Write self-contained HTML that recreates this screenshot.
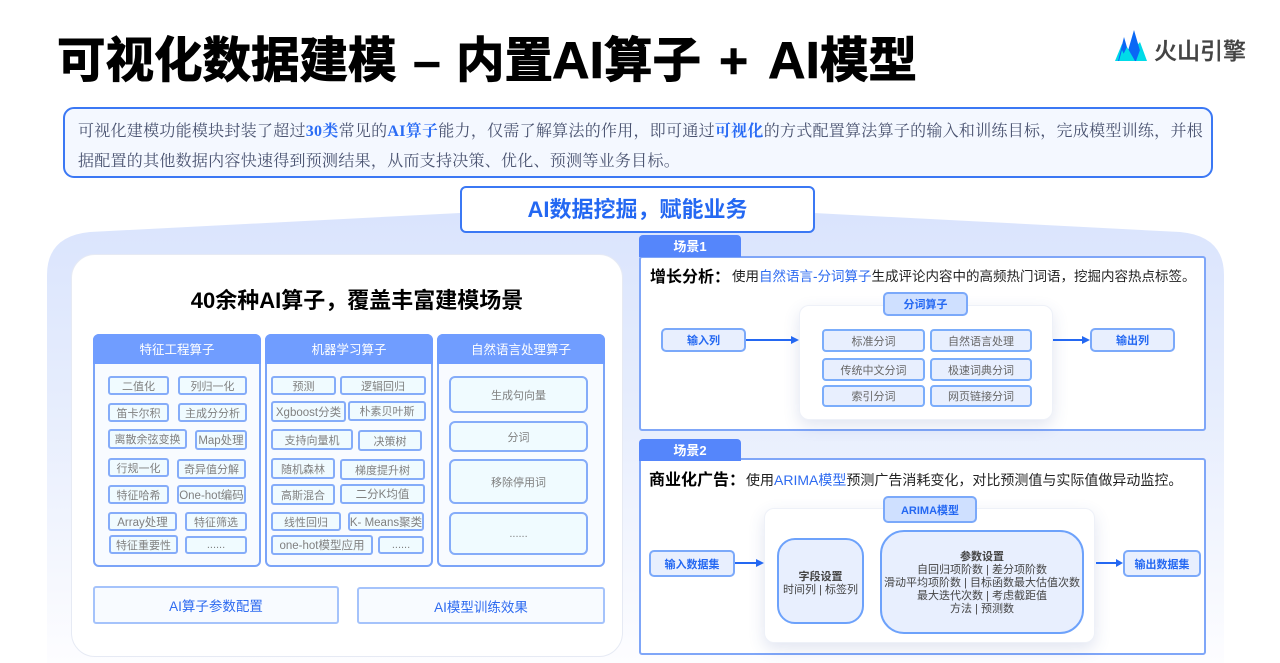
<!DOCTYPE html>
<html lang="zh"><head><meta charset="utf-8"><title>可视化数据建模</title>
<style>
*{box-sizing:border-box;margin:0;padding:0}
html,body{width:1280px;height:663px;overflow:hidden;background:#fff}
body{position:relative;font-family:"Liberation Sans","Noto Sans CJK SC",sans-serif}
.a{position:absolute}
.t{position:absolute;white-space:nowrap}
.title{top:26px;font-size:48.5px;line-height:70px;font-weight:700;color:#000;-webkit-text-stroke:1px #000}
.ai{font-size:52px;-webkit-text-stroke:.6px #000}
.desc{left:63px;top:107px;width:1150px;height:71px;background:#f4f8ff;border:2px solid #3b78f4;border-radius:11px}
.dl{left:78px;font-family:"Liberation Serif","Noto Serif CJK SC",serif;font-size:16px;letter-spacing:.27px;line-height:24px;color:#4a5370}
.dl b{color:#2a6cf5;font-weight:700}
.mid{left:460px;top:186px;width:355px;height:47px;background:#fff;border:2px solid #3b78f4;border-radius:6px;color:#2468f2;font-size:22px;font-weight:700;line-height:43px;text-align:center}
.card{left:71px;top:254px;width:552px;height:403px;background:#fff;border:1px solid #e6eaf4;border-radius:24px}
.col{border:2px solid #7ba4f8;border-radius:6px;background:#f8fbff;top:334px;height:233px}
.hd{position:absolute;left:-2px;right:-2px;top:-2px;height:30px;background:#709dff;border-radius:6px 6px 0 0;color:#fff;font-size:12.5px;line-height:32px;text-align:center}
.c{position:absolute;border:2px solid #85acf9;border-radius:3px;background:#f0fbff;color:#808080;font-size:11px;display:flex;align-items:center;justify-content:center;white-space:nowrap;overflow:hidden}
.n{font-size:11.5px}
.l{border-radius:6px;border-width:2px}
.bt{position:absolute;border:2px solid #a5c3fb;border-radius:3px;background:#f8fbff;color:#2e6bf0;font-size:13.5px;display:flex;align-items:center;justify-content:center}
.box{left:639px;width:567px;background:#fff;border:2px solid #7fa6f8;border-radius:3px}
.tab{left:639px;width:102px;height:22px;background:#5586fb;border-radius:4px 4px 0 0;color:#fff;font-size:13px;font-weight:700;line-height:24px;text-align:center}
.h{font-size:14px;line-height:20px;color:#222}
.h b{font-size:16px;color:#000;font-weight:700}
.h i{font-style:normal;color:#2e6bf0}
.w{background:#fff;border:1px solid #eef1f8;border-radius:10px;box-shadow:0 6px 16px rgba(70,95,170,.16)}
.io{position:absolute;background:#e8effe;border:2px solid #7ba9fa;border-radius:5px;color:#2468f2;font-size:11px;font-weight:700;display:flex;align-items:center;justify-content:center;white-space:nowrap}
.tag{position:absolute;background:#cfe0ff;border:2px solid #7ba9fa;border-radius:5px;color:#2468f2;font-size:11px;font-weight:700;display:flex;align-items:center;justify-content:center}
.s{position:absolute;background:#e8effe;border:2px solid #7badfb;border-radius:4px;color:#666;font-size:11px;display:flex;align-items:center;justify-content:center;white-space:nowrap}
.p{position:absolute;background:#e8effe;border:2px solid #6da2fb;color:#444;font-size:11px;line-height:13px;text-align:center;white-space:nowrap}
.p b{font-weight:700}
</style></head><body>
<svg class="a" style="left:0;top:0" width="1280" height="663">
<defs><linearGradient id="g" x1="0" y1="0" x2="0" y2="1"><stop offset="0" stop-color="#dae4fd"/><stop offset=".42" stop-color="#e6edfd"/><stop offset=".75" stop-color="#f3f6fe"/><stop offset="1" stop-color="#fdfdff"/></linearGradient></defs>
<path d="M47 275Q47 236 90 232L460 213H814L1180 232Q1224 236 1224 275V663H47Z" fill="url(#g)"/>
<path d="M1115 61L1122 44L1135 61ZM1147 61L1140 42L1124 61Z" fill="#00d9e8"/>
<path d="M1118 61L1124 37L1131 61ZM1125 61L1134 30L1143 61Z" fill="#0a68f5"/>
<path d="M1119 61L1122 50L1127 61ZM1120 61L1127 47L1135 61ZM1136 61L1140 50L1146 61Z" fill="#00dce8"/>
</svg>
<div class="t title" style="left:57px">可视化数据建模</div>
<div class="t title" style="left:413px;-webkit-text-stroke:.4px #000;font-size:50px">–</div>
<div class="t title" style="left:456px">内置</div>
<div class="t title ai" style="left:552px">AI</div>
<div class="t title" style="left:604px">算子</div>
<div class="t title ai" style="left:719px;font-size:50px">+</div>
<div class="t title ai" style="left:768px">AI</div>
<div class="t title" style="left:820px">模型</div>
<div class="t" style="left:1154px;top:34px;font-size:23px;line-height:34px;color:#444;font-weight:500;-webkit-text-stroke:.3px #444">火山引擎</div>
<div class="a desc"></div>
<div class="t dl" style="top:120px">可视化建模功能模块封装了超过<b>30类</b>常见的<b>AI算子</b>能力&#65292;仅需了解算法的作用&#65292;即可通过<b>可视化</b>的方式配置算法算子的输入和训练目标&#65292;完成模型训练&#65292;并根</div>
<div class="t dl" style="top:150px">据配置的其他数据内容快速得到预测结果&#65292;从而支持决策、优化、预测等业务目标。</div>
<div class="a mid">AI数据挖掘&#65292;赋能业务</div>

<div class="a card"></div>
<div class="t" style="left:71px;width:572px;top:285px;text-align:center;font-size:22px;line-height:32px;font-weight:700;color:#000">40余种AI算子&#65292;覆盖丰富建模场景</div>

<div class="a col" style="left:93px;width:168px"><div class="hd">特征工程算子</div></div>
<div class="a col" style="left:265px;width:168px"><div class="hd">机器学习算子</div></div>
<div class="a col" style="left:437px;width:168px"><div class="hd">自然语言处理算子</div></div>

<div class="c" style="left:108px;top:376px;width:61px;height:19px">二值化</div>
<div class="c" style="left:178px;top:376px;width:69px;height:19px">列归一化</div>
<div class="c" style="left:108px;top:403px;width:61px;height:19px">笛卡尔积</div>
<div class="c" style="left:178px;top:403px;width:69px;height:19px">主成分分析</div>
<div class="c" style="left:108px;top:429px;width:79px;height:20px">离散余弦变换</div>
<div class="c n" style="left:195px;top:430px;width:52px;height:20px">Map处理</div>
<div class="c" style="left:108px;top:458px;width:61px;height:19px">行规一化</div>
<div class="c" style="left:177px;top:459px;width:69px;height:20px">奇异值分解</div>
<div class="c" style="left:108px;top:485px;width:61px;height:19px">特征哈希</div>
<div class="c n" style="left:177px;top:485px;width:69px;height:19px">One-hot编码</div>
<div class="c n" style="left:108px;top:512px;width:69px;height:19px">Array处理</div>
<div class="c" style="left:185px;top:512px;width:62px;height:19px">特征筛选</div>
<div class="c" style="left:109px;top:535px;width:69px;height:19px">特征重要性</div>
<div class="c" style="left:185px;top:536px;width:62px;height:18px">......</div>

<div class="c" style="left:271px;top:376px;width:65px;height:19px">预测</div>
<div class="c" style="left:340px;top:376px;width:86px;height:19px">逻辑回归</div>
<div class="c n" style="left:271px;top:401px;width:75px;height:21px">Xgboost分类</div>
<div class="c" style="left:348px;top:401px;width:78px;height:20px">朴素贝叶斯</div>
<div class="c" style="left:271px;top:429px;width:82px;height:21px">支持向量机</div>
<div class="c" style="left:358px;top:430px;width:64px;height:21px">决策树</div>
<div class="c" style="left:271px;top:458px;width:64px;height:21px">随机森林</div>
<div class="c" style="left:340px;top:459px;width:85px;height:21px">梯度提升树</div>
<div class="c" style="left:271px;top:484px;width:64px;height:21px">高斯混合</div>
<div class="c n" style="left:340px;top:484px;width:85px;height:20px">二分K均值</div>
<div class="c" style="left:271px;top:512px;width:70px;height:19px">线性回归</div>
<div class="c n" style="left:348px;top:512px;width:76px;height:19px">K- Means聚类</div>
<div class="c n" style="left:271px;top:535px;width:102px;height:20px">one-hot模型应用</div>
<div class="c" style="left:378px;top:536px;width:46px;height:18px">......</div>

<div class="c l" style="left:449px;top:376px;width:139px;height:37px">生成句向量</div>
<div class="c l" style="left:449px;top:421px;width:139px;height:31px">分词</div>
<div class="c l" style="left:449px;top:459px;width:139px;height:45px">移除停用词</div>
<div class="c l" style="left:449px;top:512px;width:139px;height:43px">......</div>

<div class="bt" style="left:93px;top:586px;width:246px;height:38px">AI算子参数配置</div>
<div class="bt" style="left:357px;top:587px;width:248px;height:37px">AI模型训练效果</div>

<div class="a box" style="top:256px;height:175px"></div>
<div class="a tab" style="top:235px">场景1</div>
<div class="t h" style="left:650px;top:267px"><b>增长分析&#65306;</b></div>
<div class="t h" style="left:732px;top:267px;font-size:13.5px">使用<i>自然语言-分词算子</i>生成评论内容中的高频热门词语&#65292;挖掘内容热点标签。</div>
<div class="a w" style="left:799px;top:305px;width:254px;height:115px"></div>
<div class="tag" style="left:883px;top:292px;width:85px;height:24px">分词算子</div>
<div class="io" style="left:661px;top:328px;width:85px;height:24px">输入列</div>
<div class="io" style="left:1090px;top:328px;width:85px;height:24px">输出列</div>
<div class="s" style="left:822px;top:329px;width:103px;height:23px">标准分词</div>
<div class="s" style="left:930px;top:329px;width:102px;height:23px">自然语言处理</div>
<div class="s" style="left:822px;top:358px;width:103px;height:23px">传统中文分词</div>
<div class="s" style="left:930px;top:358px;width:102px;height:23px">极速词典分词</div>
<div class="s" style="left:822px;top:385px;width:103px;height:22px">索引分词</div>
<div class="s" style="left:930px;top:385px;width:102px;height:22px">网页链接分词</div>

<div class="a box" style="top:458px;height:197px"></div>
<div class="a tab" style="top:439px">场景2</div>
<div class="t h" style="left:649px;top:470px"><b>商业化广告&#65306;</b></div>
<div class="t h" style="left:746px;top:470px;font-size:14px">使用<i>ARIMA模型</i>预测广告消耗变化&#65292;对比预测值与实际值做异动监控。</div>
<div class="a w" style="left:764px;top:508px;width:331px;height:135px"></div>
<div class="tag" style="left:883px;top:496px;width:94px;height:27px">ARIMA模型</div>
<div class="io" style="left:649px;top:550px;width:86px;height:27px">输入数据集</div>
<div class="io" style="left:1123px;top:550px;width:78px;height:27px">输出数据集</div>
<div class="p" style="left:777px;top:538px;width:87px;height:86px;border-radius:18px;padding-top:31px"><b>字段设置</b><br>时间列 | 标签列</div>
<div class="p" style="left:880px;top:530px;width:204px;height:104px;border-radius:24px;padding-top:19px"><b>参数设置</b><br>自回归项阶数 | 差分项阶数<br>滑动平均项阶数 | 目标函数最大估值次数<br>最大迭代次数 | 考虑截距值<br>方法 | 预测数</div>

<svg class="a" style="left:0;top:0;pointer-events:none" width="1280" height="663" fill="#2468f2" stroke="none">
<rect x="746" y="339" width="46" height="2"/><path d="M791 336L799 340L791 344Z"/>
<rect x="1053" y="339" width="30" height="2"/><path d="M1082 336L1090 340L1082 344Z"/>
<rect x="735" y="562" width="22" height="2"/><path d="M756 559L764 563L756 567Z"/>
<rect x="1096" y="562" width="21" height="2"/><path d="M1116 559L1123 563L1116 567Z"/>
</svg>
</body></html>
